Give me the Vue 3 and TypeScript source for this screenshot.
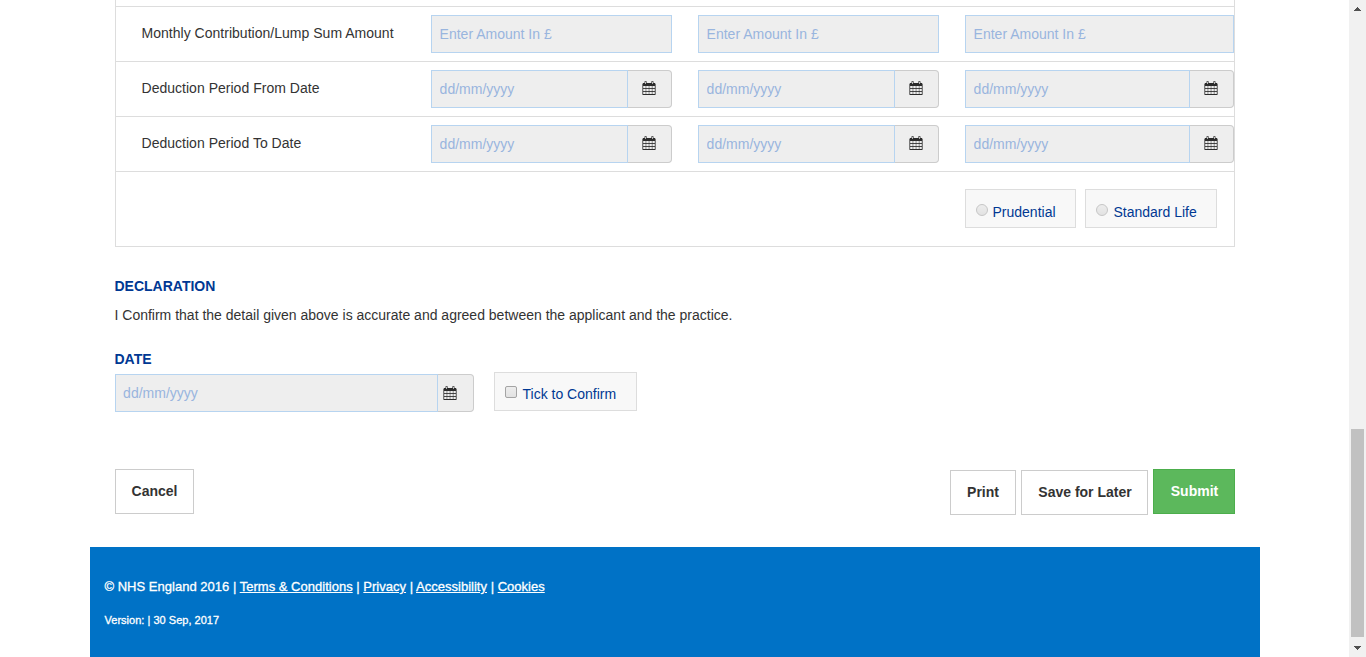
<script setup lang="ts">
import { defineComponent, h } from 'vue'

const dateRows: string[] = ['Deduction Period From Date', 'Deduction Period To Date']
const providers: string[] = ['Prudential', 'Standard Life']
const footerLinks: string[] = ['Terms & Conditions', 'Privacy', 'Accessibility', 'Cookies']

const CalendarIcon = defineComponent({
  render: () =>
    h('svg', { width: 14, height: 14, viewBox: '0 0 14 14', fill: '#2b2b2b', 'aria-hidden': 'true' }, [
      h('path', { d: 'M1 2H13V2.3L13.6 3V5H.4V3L1 2.3Z' }),
      h('path', { d: 'M2.4 .8Q2.4 0 3.2 0H4Q4.8 0 4.8 .8V3H2.4ZM9.2 .8Q9.2 0 10 0H10.8Q11.6 0 11.6 .8V3H9.2Z', opacity: 0.75 }),
      h('path', { d: 'M3.3 1H4V3H3.3ZM10.1 1H10.8V3H10.1Z', fill: '#eee' }),
      h('path', { d: 'M.4 5H1.2V13H.4ZM12.8 5H13.6V13H12.8Z' }),
      h('path', { d: 'M1 7H13V8H1ZM1 10H13V11H1Z', opacity: 0.85 }),
      h('path', { d: 'M3.6 5H4.3V13H3.6ZM6.7 5H7.4V13H6.7ZM9.8 5H10.5V13H9.8Z', opacity: 0.7 }),
      h('path', { d: 'M.4 13H13.6V13.6L13.2 14H.8L.4 13.6Z' }),
    ]),
})
</script>

<template>
  <main class="container">
    <section class="contributions">
      <div class="sliver"></div>
      <div class="row">
        <label class="row-label">Monthly Contribution/Lump Sum Amount</label>
        <input v-for="n in 3" :key="n" class="field" placeholder="Enter Amount In £" disabled />
      </div>
      <div v-for="label in dateRows" :key="label" class="row">
        <label class="row-label">{{ label }}</label>
        <div v-for="n in 3" :key="n" class="date-group">
          <input class="field" placeholder="dd/mm/yyyy" disabled />
          <span class="addon"><CalendarIcon /></span>
        </div>
      </div>
      <div class="provider-row">
        <label v-for="name in providers" :key="name" class="choice">
          <input type="radio" name="provider" class="mark radio" disabled />{{ name }}
        </label>
      </div>
    </section>

    <section class="declaration">
      <h2>DECLARATION</h2>
      <p>I Confirm that the detail given above is accurate and agreed between the applicant and the practice.</p>
      <h2>DATE</h2>
      <div class="confirm">
        <div class="date-group signing-date">
          <input class="field" placeholder="dd/mm/yyyy" disabled />
          <span class="addon"><CalendarIcon /></span>
        </div>
        <label class="choice tick">
          <input type="checkbox" class="mark checkbox" disabled />Tick to Confirm
        </label>
      </div>
    </section>

    <div class="actions">
      <button class="btn cancel">Cancel</button>
      <button class="btn print">Print</button>
      <button class="btn save">Save for Later</button>
      <button class="btn submit">Submit</button>
    </div>

    <footer>
      <div class="legal">© NHS England 2016<template v-for="link in footerLinks" :key="link"> | <a href="#">{{ link }}</a></template></div>
      <div class="version">Version: | 30 Sep, 2017</div>
    </footer>
  </main>

  <div class="scrollbar">
    <svg class="arrow" width="7" height="4" viewBox="0 0 7 4" shape-rendering="crispEdges"><path d="M3 0h1v1h1v1h1v1h1v1H0V3h1V2h1V1h1z" fill="#505050" /></svg>
    <div class="thumb"></div>
    <svg class="arrow" width="7" height="4" viewBox="0 0 7 4" shape-rendering="crispEdges"><path d="M0 0h7v1H6v1H5v1H4v1H3V3H2V2H1V1H0z" fill="#505050" /></svg>
  </div>
</template>

<style>
body {
  background: #fff;
  overflow: hidden;
}
</style>

<style scoped>
* {
  box-sizing: border-box;
}

.container {
  width: 1170px;
  height: 657px;
  margin-left: 89.5px;
  display: flex;
  flex-direction: column;
  overflow: hidden;
  font: 14px/20px "Liberation Sans", Arial, sans-serif;
  color: #333;
}

.contributions {
  margin: 0 25px;
  border: 1px solid #ddd;
  border-top: 0;
}

.sliver {
  height: 6px;
}

.row {
  display: grid;
  grid-template-columns: 289.5px 241px 241px 1fr;
  column-gap: 26px;
  height: 55px;
  padding-top: 8px;
  border-top: 1px solid #ddd;
}

.row-label {
  padding: 8px 0 0 26px;
  letter-spacing: 0.02px;
}

.field {
  display: block;
  width: 100%;
  min-width: 0;
  height: 38px;
  margin: 0;
  padding: 0 7.6px;
  border: 1px solid #b7d4f0;
  border-radius: 0;
  background: #eee;
  font: inherit;
  color: #333;
}

.field::placeholder {
  color: #99b5de;
  opacity: 1;
}

.date-group {
  display: flex;
}

.date-group .field {
  flex: 1;
}

.addon {
  display: flex;
  flex: 0 0 44px;
  height: 38px;
  padding: 10px 0 0 14px;
  border: 1px solid #ccc;
  border-left: 0;
  border-radius: 0 4px 4px 0;
  background: #eee;
}

.provider-row {
  display: flex;
  gap: 9px;
  height: 75px;
  padding: 17px 17px 0 0;
  justify-content: flex-end;
  border-top: 1px solid #ddd;
}

.choice {
  display: flex;
  height: 39px;
  padding: 12px 0 0 10px;
  border: 1px solid #ddd;
  background: #f8f8f8;
  color: #003893;
  white-space: nowrap;
}

.provider-row .choice:first-child {
  width: 111px;
}

.provider-row .choice:last-child {
  width: 132px;
}

.mark {
  appearance: none;
  flex: none;
  width: 12px;
  height: 12px;
  margin: 2px 5px 0 0;
  border: 1px solid #c6c6c6;
  background: linear-gradient(#ededed, #e2e2e2);
}

.radio {
  border-radius: 50%;
}

.provider-row .choice:last-child .mark {
  margin-right: 6px;
}

.checkbox {
  margin-right: 6px;
  border-color: #a4a4a4;
  border-radius: 2px;
}

.declaration {
  padding: 29px 25px 0;
}

h2 {
  margin: 0;
  font-size: 14px;
  line-height: 20px;
  color: #003893;
}

p {
  margin: 9px 0 24px;
}

.confirm {
  display: flex;
  padding-top: 3px;
}

.signing-date {
  width: 359px;
  margin-top: 2px;
}

.signing-date .addon {
  flex-basis: 36px;
  padding: 11px 0 0 5.5px;
}

.tick {
  width: 143px;
  margin-left: 20px;
  padding-top: 11px;
}

.actions {
  display: flex;
  align-items: flex-start;
  padding: 57px 25px 0;
}

.btn {
  height: 45px;
  margin: 0;
  padding: 0 0 2px 1px;
  border: 1px solid #ccc;
  background: #fff;
  font: bold 14px/20px "Liberation Sans", Arial, sans-serif;
  color: #333;
}

.cancel {
  width: 79px;
  margin-right: auto;
}

.print {
  width: 66px;
  margin: 1px 5px 0 0;
}

.save {
  width: 127px;
  margin: 1px 5px 0 0;
  padding-left: 2px;
}

.submit {
  width: 82px;
  padding-left: 2px;
  border-color: #4cae4c;
  background: #5cb85c;
  color: #fff;
}

footer {
  flex: 1;
  margin-top: 32px;
  padding: 30px 15px 0;
  background: #0072c6;
  color: #fff;
  -webkit-text-stroke: 0.3px #fff;
}

.legal {
  font-size: 13px;
  letter-spacing: 0.015px;
}

.version {
  margin-top: 13px;
  font-size: 11px;
  letter-spacing: 0.02px;
}

a {
  color: #fff;
}

.scrollbar {
  position: fixed;
  top: 0;
  right: 0;
  display: flex;
  flex-direction: column;
  align-items: center;
  width: 17px;
  height: 657px;
  padding: 7px 0;
  background: #f1f1f1;
}

.arrow {
  display: block;
}

.thumb {
  width: 13px;
  height: 208px;
  margin: auto 0 9px;
  background: #c1c1c1;
}
</style>
